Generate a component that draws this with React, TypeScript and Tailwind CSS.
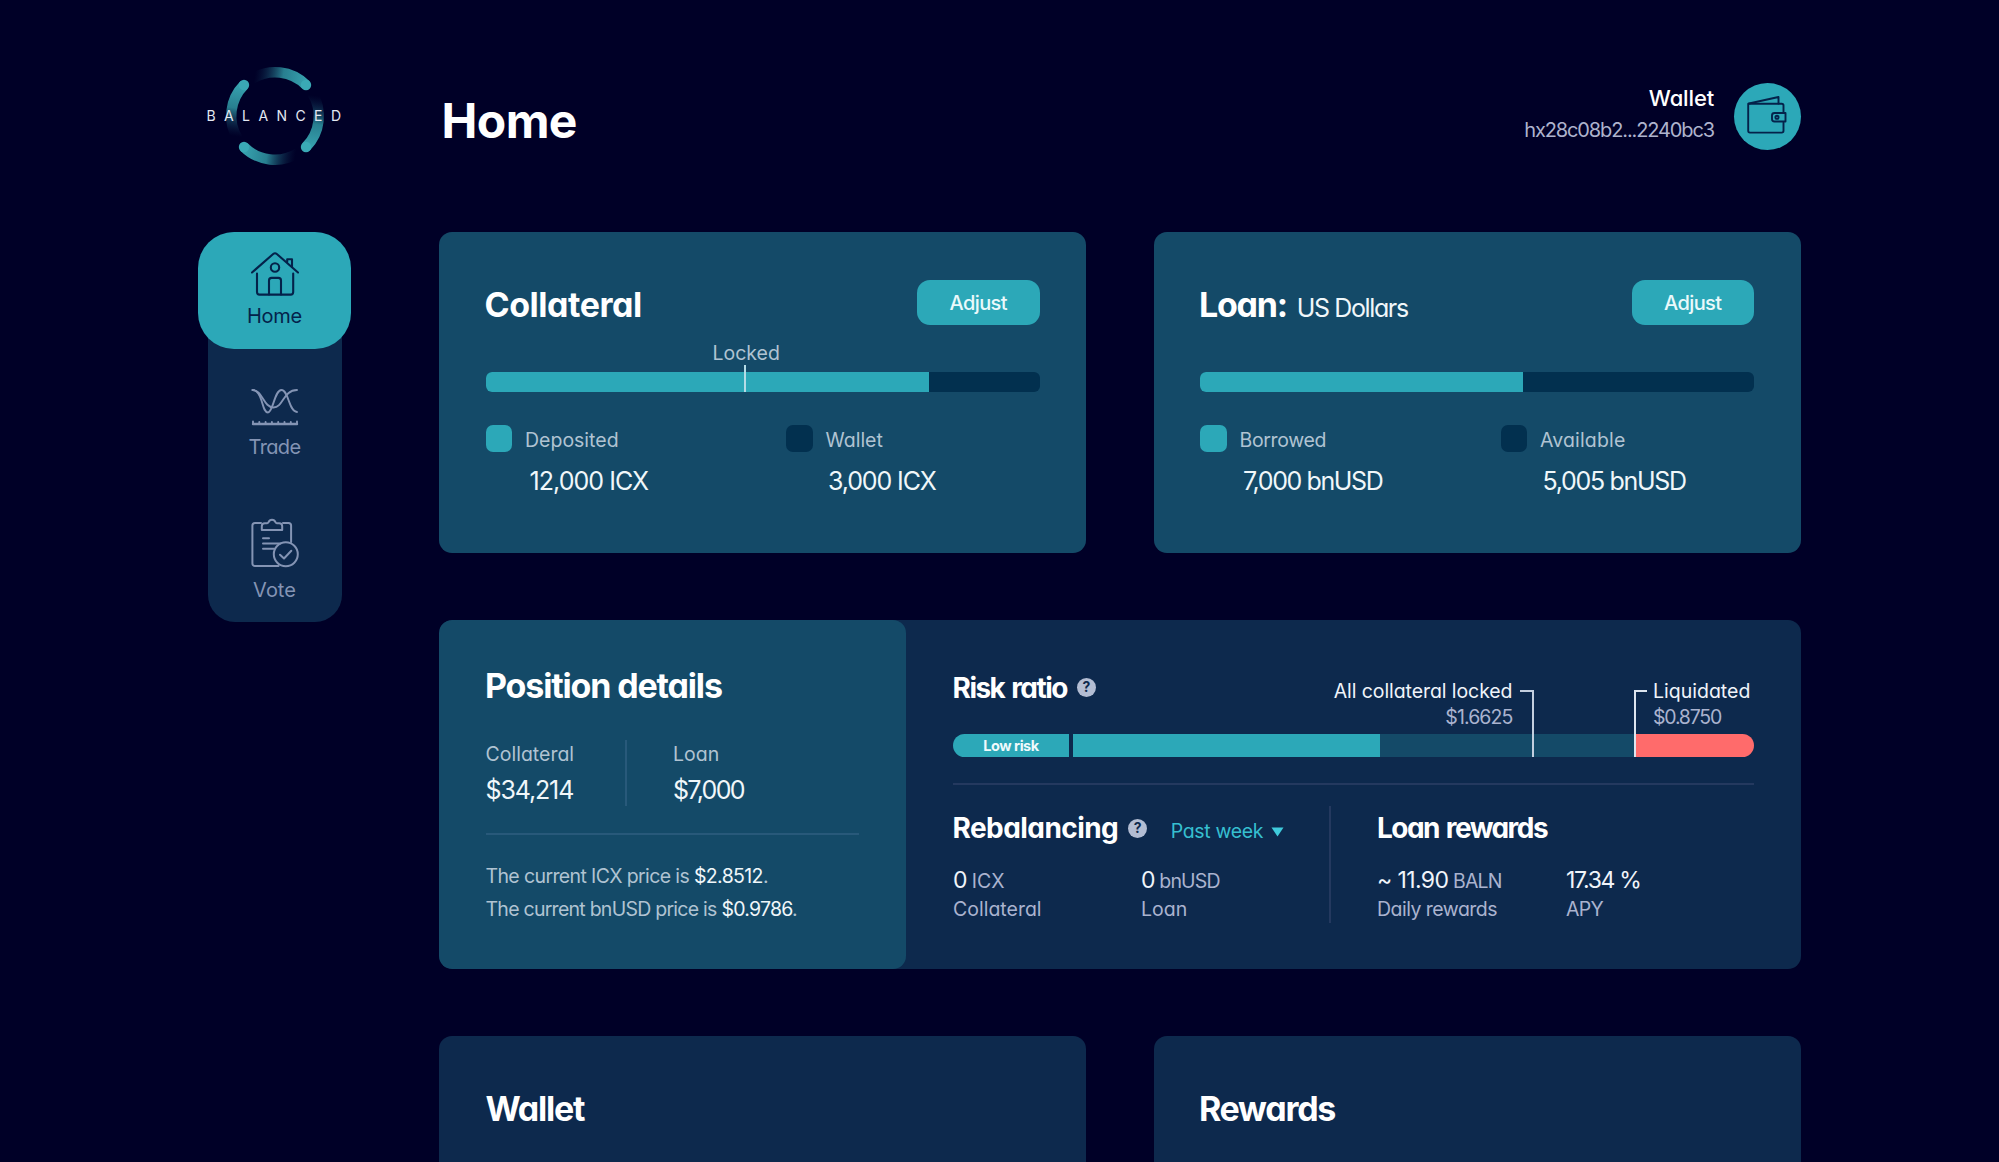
import type { ReactNode } from "react";

function Logo() {
  return (
    <div className="relative mx-auto mt-[65px] h-[102px] w-[134px]">
      <svg viewBox="-67 -51 134 102" className="h-full w-full" fill="none">
        <defs>
          <linearGradient id="arc" gradientUnits="userSpaceOnUse" x1="31" y1="0" x2="-25" y2="-8">
            <stop offset="0" stopColor="#3aa9b5" />
            <stop offset="0.5" stopColor="#287f90" />
            <stop offset="1" stopColor="#0c2a4d" stopOpacity="0" />
          </linearGradient>
        </defs>
        {[0, 90, 180, 270].map((angle) => (
          <g key={angle} transform={`rotate(${angle})`}>
            <path d="M-23 -37.2A43.8 43.8 0 0 1 31 -31" stroke="url(#arc)" strokeWidth="10.4" />
            <circle cx="31" cy="-31" r="5.2" fill="#3aa9b5" />
          </g>
        ))}
      </svg>
      <span className="absolute top-[43px] left-[-1px] text-[14px] leading-[16px] tracking-[0.6em] whitespace-nowrap text-[#e3e8f2]">
        BALANCED
      </span>
    </div>
  );
}

function HomeIcon() {
  return (
    <svg width="48" height="44" viewBox="0 0 48 44" fill="none" stroke="#04224a" strokeWidth="2.1" strokeLinecap="round" strokeLinejoin="round">
      <path d="M1 20.5L22.2 2a2.8 2.8 0 0 1 3.6 0L47 20.5" />
      <path d="M36.2 10V7.2H41V15" />
      <path d="M6 21.5V40a2.6 2.6 0 0 0 2.6 2.6h31a2.6 2.6 0 0 0 2.6-2.6V21.5" />
      <circle cx="24" cy="15.5" r="4.2" />
      <path d="M18 42.5V28.5a2.6 2.6 0 0 1 2.6-2.6h6.8a2.6 2.6 0 0 1 2.6 2.6v14" />
    </svg>
  );
}

function TradeIcon() {
  return (
    <svg width="48" height="38" viewBox="0 0 48 38" fill="none" stroke="currentColor" strokeWidth="1.9" strokeLinecap="round" strokeLinejoin="round">
      <path d="M1.5 2C6 2 8.5 6 10.5 12.5C12.5 19 13.5 24.5 17 24.5C22 24.5 23.5 2 30.5 2C37.5 2 38 24 46 24" />
      <path d="M1.5 2C11.5 2 12.5 19.5 22.5 19.5C32.5 19.5 32 2 46 2" />
      <path d="M2 36H46" strokeWidth="2.4" />
      <path d="M2 36V33.500M8.300 36V34M14.600 36V34M20.900 36V34M27.200 36V34M33.500 36V34M39.800 36V34M46 36V33.500" />
    </svg>
  );
}

function VoteIcon() {
  return (
    <svg width="48" height="51" viewBox="0 0 48 51" fill="none" stroke="currentColor" strokeWidth="2" strokeLinecap="round" strokeLinejoin="round">
      <path d="M10 6H4a2.600 2.600 0 0 0-2.600 2.600V46.500A2.600 2.600 0 0 0 4 49.100H27.500M32 6h5.500a2.600 2.600 0 0 1 2.600 2.600V25" />
      <path d="M10.800 13V9.200a3 3 0 0 1 3-3h2.400a1.500 1.500 0 0 0 1.400-1.100a3.600 3.600 0 0 1 6.800 0a1.500 1.500 0 0 0 1.400 1.100h2.400a3 3 0 0 1 3 3V13Z" />
      <path d="M12 21.300H18M12 26.500H29.500M12 31.800H23" />
      <circle cx="34.800" cy="37.300" r="12" />
      <path d="M29 37.700L33 41.500L40.300 33.800" />
    </svg>
  );
}

function WalletIcon() {
  return (
    <svg width="40" height="38" viewBox="0 0 40 38" fill="none" stroke="#04224a" strokeWidth="1.9" strokeLinejoin="round" strokeLinecap="round">
      <path d="M36.500 16.500V9.500a1.800 1.800 0 0 0-1.800-1.800H1.200V34.800a1.800 1.800 0 0 0 1.800 1.800H34.700a1.800 1.800 0 0 0 1.800-1.800V26.500" />
      <path d="M2 7.500L31.500 1V7.500" />
      <path d="M38.500 17H27.500a2.500 2.500 0 0 0-2.500 2.500v3.500a2.500 2.500 0 0 0 2.500 2.500H38.500Z" />
      <circle cx="30" cy="21.300" r="1.600" />
    </svg>
  );
}

function Help() {
  return (
    <span className="flex size-[19px] items-center justify-center rounded-full bg-[#b3bdd3] text-[14px] leading-none font-bold text-[#0d294d]">
      ?
    </span>
  );
}

function AssetCard({ title, bar, marker, legend }: { title: ReactNode; bar: string; marker?: ReactNode; legend: ReactNode }) {
  return (
    <section className="h-[320.500px] w-[647px] rounded-[13px] bg-[#144a68] px-[46.500px] pt-[48px]">
      <div className="flex h-[45px] items-center justify-between">
        <h2 className="-ml-[1px] flex items-baseline pt-[5px] whitespace-nowrap">{title}</h2>
        <button className="h-[45px] w-[122.500px] rounded-[13px] bg-[#2ca8b8] pt-[1px] text-[20px] font-medium tracking-[-0.030em] text-[#eaf9fb]">
          Adjust
        </button>
      </div>
      <div className="relative mt-[47px] h-[20px]">
        <div className="h-full overflow-hidden rounded-[6px] bg-[#02304f]">
          <div className={bar} />
        </div>
        {marker}
      </div>
      <div className="mt-[33px] flex">{legend}</div>
    </section>
  );
}

function Legend({ swatch, label, labelClass, value, valueClass }: { swatch: string; label: string; labelClass: string; value: string; valueClass: string }) {
  return (
    <div className="w-[300.500px] shrink-0">
      <div className="flex h-[26.500px] items-center">
        <span className={`size-[26.500px] rounded-[7px] ${swatch}`} />
        <span className={`ml-[13px] pt-[4px] text-[19.500px] leading-none text-[#b0c3d2] ${labelClass}`}>{label}</span>
      </div>
      <div className={`mt-[14px] text-[25px] leading-[30px] whitespace-nowrap text-[#f0f7fa] ${valueClass}`}>{value}</div>
    </div>
  );
}

export default function App() {
  return (
    <div className="flex h-[1162px] w-[1999px] overflow-hidden bg-[#000027] pl-[198px] font-['Inter',sans-serif] text-white [font-feature-settings:'cv11']">
      <aside className="w-[153px]">
        <Logo />
        <nav className="mx-auto mt-[65px] flex h-[390px] w-[134px] flex-col items-center rounded-[27px] bg-[#0d294d] text-[20px] leading-[24px] text-[#8494b4]">
          <a className="flex h-[117px] w-[153px] flex-col items-center rounded-[36px] bg-[#2ca8b8] pt-[20px] text-[#04224a]">
            <HomeIcon />
            <span className="mt-[8px] tracking-[-0.013em]">Home</span>
          </a>
          <a className="flex flex-col items-center pt-[39px]">
            <TradeIcon />
            <span className="mt-[8.500px] tracking-[-0.031em]">Trade</span>
          </a>
          <a className="flex flex-col items-center pt-[58.500px]">
            <VoteIcon />
            <span className="mt-[9.500px]">Vote</span>
          </a>
        </nav>
      </aside>

      <main className="ml-[88px] w-[1361.500px]">
        <header className="flex h-[232px] items-start justify-between">
          <h1 className="mt-[91px] ml-[2.500px] text-[48px] leading-[60px] font-bold tracking-[-0.012em]">Home</h1>
          <div className="mt-[83px] flex">
            <div className="mr-[19.500px] text-right">
              <div className="mt-[2px] text-[22px] leading-[26px] font-medium tracking-[-0.007em]">Wallet</div>
              <div className="mt-[6.500px] text-[20px] leading-[24px] tracking-[-0.056em] text-[#aeb3cd]">hx28c08b2...2240bc3</div>
            </div>
            <div className="flex size-[67px] items-center justify-center rounded-full bg-[#2ca8b8] pb-[3px]">
              <WalletIcon />
            </div>
          </div>
        </header>

        <div className="flex justify-between">
          <AssetCard
            title={<span className="text-[34px] leading-none font-bold tracking-[-0.014em]">Collateral</span>}
            bar="h-full w-[80%] bg-[#2ca8b8]"
            marker={
              <>
                <span className="absolute top-[-31.500px] left-[227px] text-[19.500px] leading-[24px] text-[#b0c3d2]">Locked</span>
                <span className="absolute top-[-7px] left-[258px] h-[27px] w-[2px] bg-[#b5dce6]" />
              </>
            }
            legend={
              <>
                <Legend swatch="bg-[#2ca8b8]" label="Deposited" labelClass="" value="12,000 ICX" valueClass="pl-[44px] tracking-[-0.038em]" />
                <Legend swatch="bg-[#02304f]" label="Wallet" labelClass="" value="3,000 ICX" valueClass="pl-[42px] tracking-[-0.045em]" />
              </>
            }
          />
          <AssetCard
            title={
              <>
                <span className="text-[34px] leading-none font-bold tracking-[-0.037em]">Loan:</span>
                <span className="ml-[10px] text-[25px] leading-none tracking-[-0.055em] text-[#f0f7fa]">US Dollars</span>
              </>
            }
            bar="h-full w-[58.300%] bg-[#2ca8b8]"
            legend={
              <>
                <Legend swatch="bg-[#2ca8b8]" label="Borrowed" labelClass="tracking-[-0.018em]" value="7,000 bnUSD" valueClass="pl-[43px] tracking-[-0.056em]" />
                <Legend swatch="bg-[#02304f]" label="Available" labelClass="tracking-[0.008em]" value="5,005 bnUSD" valueClass="pl-[42px] tracking-[-0.052em]" />
              </>
            }
          />
        </div>

        <section className="mt-[67px] flex h-[349.500px] overflow-hidden rounded-[13px] bg-[#0d294d]">
          <div className="w-[467px] rounded-[13px] bg-[#144a68] pt-[46.500px] pl-[46.500px] text-[#b0c3d2]">
            <h2 className="-ml-[0.500px] text-[34px] leading-[40px] font-bold tracking-[-0.034em] text-white">Position details</h2>
            <div className="mt-[34px] flex h-[65.500px]">
              <div className="w-[141px] border-r-2 border-[#28597a] pt-[2px] text-[19.500px] leading-[24px]">
                Collateral
                <div className="mt-[9px] text-[25px] leading-[30px] tracking-[-0.045em] text-[#f0f7fa]">$34,214</div>
              </div>
              <div className="pt-[2px] pl-[46.500px] text-[19.500px] leading-[24px]">
                Loan
                <div className="mt-[9px] text-[25px] leading-[30px] tracking-[-0.067em] text-[#f0f7fa]">$7,000</div>
              </div>
            </div>
            <div className="mt-[27px] h-[2px] w-[373.500px] bg-[#28597a]" />
            <p className="mt-[25px] text-[19.500px] leading-[33px] tracking-[-0.032em]">
              The current ICX price is <span className="text-[#f0f7fa]">$2.8512</span>.
            </p>
            <p className="text-[19.500px] leading-[33px] tracking-[-0.038em]">
              The current bnUSD price is <span className="text-[#f0f7fa]">$0.9786</span>.
            </p>
          </div>

          <div className="w-[848px] shrink-0 pt-[52px] pl-[47px] text-[#aab3cf]">
            <div className="relative flex h-[62.500px] items-start">
              <h3 className="-ml-[0.500px] text-[28px] leading-[32px] font-bold tracking-[-0.054em] text-white [word-spacing:0.060em]">Risk ratio</h3>
              <div className="mt-[6px] ml-[10px]">
                <Help />
              </div>
              <div className="absolute top-[6px] right-[241.500px] text-right text-[19.500px] leading-[26px] whitespace-nowrap">
                <div className="tracking-[-0.004em] text-[#f0f4fa]">All collateral locked</div>
                <div className="tracking-[-0.046em]">$1.6625</div>
              </div>
              <div className="absolute top-[18.500px] right-[220px] z-10 h-[67px] w-[14px] border-t-2 border-r-2 border-[#c3cfdf]" />
              <div className="absolute top-[18.500px] left-[680.500px] z-10 h-[67px] w-[13px] border-t-2 border-l-2 border-[#dde5ef]" />
              <div className="absolute top-[6px] left-[700px] text-[19.500px] leading-[26px] whitespace-nowrap">
                <div className="text-[#f0f4fa]">Liquidated</div>
                <div className="tracking-[-0.062em]">$0.8750</div>
              </div>
            </div>
            <div className="flex h-[23px] w-[801px] overflow-hidden rounded-full">
              <div className="flex w-[116px] items-center justify-center bg-[#2ca8b8] pt-[2px] text-[14.500px] leading-none font-bold tracking-[-0.032em] text-[#f0fafc]">
                Low risk
              </div>
              <div className="ml-[4px] w-[307px] bg-[#2ca8b8]" />
              <div className="w-[254px] bg-[#144a68]" />
              <div className="flex-1 bg-[#ff6b6b]" />
            </div>
            <div className="mt-[26px] h-[2px] w-[801px] bg-[#24395f]" />
            <div className="mt-[21px] flex">
              <div className="h-[117px] w-[378px] border-r-2 border-[#24395f] pt-[6px]">
                <div className="flex">
                  <h3 className="-ml-[0.500px] text-[28px] leading-[32px] font-bold tracking-[-0.020em] text-white">Rebalancing</h3>
                  <div className="mt-[6.500px] ml-[10px]">
                    <Help />
                  </div>
                  <div className="mt-[6.500px] ml-[23.500px] flex text-[19.500px] leading-[24px] tracking-[-0.017em] text-[#36bfd0]">
                    Past week
                    <svg width="13" height="10" viewBox="0 0 13 10" className="mt-[8.500px] ml-[7.500px]" fill="#3fcbdc">
                      <path d="M0.500 0.500H12.500L6.500 9.500Z" />
                    </svg>
                  </div>
                </div>
                <div className="mt-[19.500px] flex">
                  <div className="w-[188px]">
                    <div className="h-[32px] text-[19.500px] leading-[32px]">
                      <span className="text-[23px] tracking-[-0.053em] text-[#f0f4fa]">0</span> ICX
                    </div>
                    <div className="mt-[1.500px] text-[19.500px] leading-[24px]">Collateral</div>
                  </div>
                  <div>
                    <div className="h-[32px] text-[19.500px] leading-[32px] tracking-[-0.043em]">
                      <span className="text-[23px] text-[#f0f4fa]">0</span> bnUSD
                    </div>
                    <div className="mt-[1.500px] text-[19.500px] leading-[24px]">Loan</div>
                  </div>
                </div>
              </div>
              <div className="pt-[6px] pl-[46px]">
                <h3 className="text-[28px] leading-[32px] font-bold tracking-[-0.055em] text-white [word-spacing:0.060em]">Loan rewards</h3>
                <div className="mt-[19.500px] flex">
                  <div className="w-[189px]">
                    <div className="h-[32px] text-[19.500px] leading-[32px] tracking-[-0.045em]">
                      <span className="text-[23px] tracking-[-0.026em] text-[#f0f4fa]">~ 11.90</span> BALN
                    </div>
                    <div className="mt-[1.500px] text-[19.500px] leading-[24px] tracking-[-0.027em]">Daily rewards</div>
                  </div>
                  <div>
                    <div className="h-[32px] text-[23px] leading-[32px] tracking-[-0.056em] text-[#f0f4fa]">17.34 %</div>
                    <div className="mt-[1.500px] text-[19.500px] leading-[24px] tracking-[-0.038em]">APY</div>
                  </div>
                </div>
              </div>
            </div>
          </div>
        </section>

        <div className="mt-[67px] flex justify-between text-[34px] leading-[40px] font-bold">
          <section className="h-[320px] w-[647px] rounded-[13px] bg-[#0d294d] pt-[53px] pl-[46.500px]">
            <h2 className="tracking-[-0.036em]">Wallet</h2>
          </section>
          <section className="h-[320px] w-[647px] rounded-[13px] bg-[#0d294d] pt-[53px] pl-[45.500px]">
            <h2 className="tracking-[-0.038em]">Rewards</h2>
          </section>
        </div>
      </main>
    </div>
  );
}
